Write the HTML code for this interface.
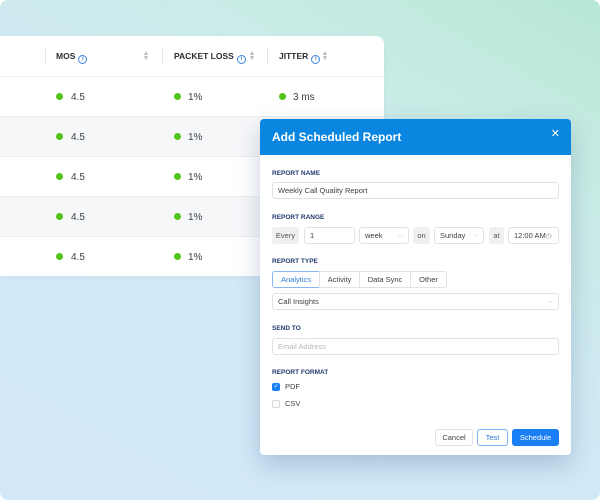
<!DOCTYPE html>
<html><head><style>
*{box-sizing:border-box;margin:0;padding:0}
body{width:600px;height:500px;background:#fff;font-family:"Liberation Sans",sans-serif;overflow:hidden}
#bg{position:absolute;left:0;top:0;width:600px;height:500px;border-radius:8px;overflow:hidden;background:linear-gradient(30deg,#d3e9fa 0%,#d2e9f7 45%,#c9ebe6 75%,#b8e8d6 100%)}
.abs{position:absolute}
#card{left:0;top:36px;width:384px;height:240px;background:#fff;border-radius:0 8px 0 0;overflow:hidden;box-shadow:0 2px 6px rgba(0,0,0,.04)}
.row{position:absolute;left:0;width:384px;height:40px;border-top:1px solid #eceef0}
.hd{font-size:8.5px;font-weight:bold;color:#2a2f36;line-height:10px;white-space:nowrap}
.sep{width:1px;height:18px;background:#e6e8eb;top:11px}
.info{display:inline-block;width:9px;height:9px;border:1px solid #3a86e0;border-radius:50%;font-size:6px;color:#3a86e0;text-align:center;line-height:7px;vertical-align:-1px;margin-left:3px;font-weight:bold}
.sort{color:#b9bec5;font-size:7px;line-height:5px;width:8px;text-align:center}
.v{font-size:10px;color:#3c4148;line-height:12px}
.dot{width:7px;height:7px;border-radius:50%;background:#52c41a}
#modal{left:260px;top:119px;width:311px;height:336px;background:#fff;border-radius:4px;overflow:hidden;box-shadow:0 10px 24px rgba(60,90,130,.28)}
#mh{height:36px;background:#0a86e0;color:#fff;font-weight:bold;font-size:12px;padding:11px 0 0 12px}
.lbl{font-size:6.5px;font-weight:bold;color:#223a6e;left:12px}
.inp{border:1px solid #dfe2e6;border-radius:3px;background:#fff;font-size:7.5px;color:#3c4148;padding-left:5px;line-height:15px;height:17px}
.gb{background:#eff0f2;border-radius:3px;font-size:7.5px;color:#555;text-align:center;line-height:17px;height:17px}
.chev{position:absolute;right:5px;top:0;color:#b8bcc2;font-size:7px;line-height:15px}
.tab{top:152px;height:17px;border:1px solid #dfe2e6;font-size:7.5px;color:#3c4148;text-align:center;line-height:15px;background:#fff}
.btn{top:310px;height:17px;border-radius:3px;font-size:7.5px;text-align:center;line-height:15px}
</style></head><body>
<div id="bg">
<div id="card" class="abs">
 <div class="abs sep" style="left:45px"></div>
 <div class="abs sep" style="left:162px"></div>
 <div class="abs sep" style="left:267px"></div>
 <div class="abs hd" style="left:56px;top:15px">MOS<span class="info">i</span></div>
 <div class="abs sort" style="left:142px;top:15px">▲<br>▼</div>
 <div class="abs hd" style="left:174px;top:15px">PACKET LOSS<span class="info">i</span></div>
 <div class="abs sort" style="left:248px;top:15px">▲<br>▼</div>
 <div class="abs hd" style="left:279px;top:15px">JITTER<span class="info">i</span></div>
 <div class="abs sort" style="left:321px;top:15px">▲<br>▼</div>
 <div class="row" style="top:40px;background:#fff"></div>
 <div class="row" style="top:80px;background:#f6f7f9"></div>
 <div class="row" style="top:120px;background:#fff"></div>
 <div class="row" style="top:160px;background:#f6f7f9"></div>
 <div class="row" style="top:200px;background:#fff"></div>
</div>
<div class="abs" style="left:0;top:38px;width:384px;height:240px">
 <div class="abs dot" style="left:56px;top:55px"></div><div class="abs v" style="left:71px;top:54px">4.5</div>
 <div class="abs dot" style="left:174px;top:55px"></div><div class="abs v" style="left:188px;top:54px">1%</div>
 <div class="abs dot" style="left:279px;top:55px"></div><div class="abs v" style="left:293px;top:54px">3 ms</div>
 <div class="abs dot" style="left:56px;top:95px"></div><div class="abs v" style="left:71px;top:94px">4.5</div>
 <div class="abs dot" style="left:174px;top:95px"></div><div class="abs v" style="left:188px;top:94px">1%</div>
 <div class="abs dot" style="left:56px;top:135px"></div><div class="abs v" style="left:71px;top:134px">4.5</div>
 <div class="abs dot" style="left:174px;top:135px"></div><div class="abs v" style="left:188px;top:134px">1%</div>
 <div class="abs dot" style="left:56px;top:175px"></div><div class="abs v" style="left:71px;top:174px">4.5</div>
 <div class="abs dot" style="left:174px;top:175px"></div><div class="abs v" style="left:188px;top:174px">1%</div>
 <div class="abs dot" style="left:56px;top:215px"></div><div class="abs v" style="left:71px;top:214px">4.5</div>
 <div class="abs dot" style="left:174px;top:215px"></div><div class="abs v" style="left:188px;top:214px">1%</div>
</div>
<div id="modal" class="abs">
 <div id="mh">Add Scheduled Report</div>
 <div class="abs" style="right:11px;top:8px;color:#fff;font-size:11px">✕</div>
 <div class="abs lbl" style="top:51px">REPORT NAME</div>
 <div class="abs inp" style="left:12px;top:63px;width:287px">Weekly Call Quality Report</div>
 <div class="abs lbl" style="top:95px">REPORT RANGE</div>
 <div class="abs gb" style="left:12px;top:108px;width:27px">Every</div>
 <div class="abs inp" style="left:44px;top:108px;width:51px">1</div>
 <div class="abs inp" style="left:99px;top:108px;width:50px">week<span class="chev">⌵</span></div>
 <div class="abs gb" style="left:153px;top:108px;width:17px">on</div>
 <div class="abs inp" style="left:174px;top:108px;width:50px">Sunday<span class="chev">⌵</span></div>
 <div class="abs gb" style="left:229px;top:108px;width:15px">at</div>
 <div class="abs inp" style="left:248px;top:108px;width:51px;padding-left:5px">12:00 AM<span style="color:#999;font-size:7px">◷</span></div>
 <div class="abs lbl" style="top:139px">REPORT TYPE</div>
 <div class="abs tab" style="left:12px;width:48px;border-color:#8ab8ee;color:#2f7fdc;border-radius:3px 0 0 3px">Analytics</div>
 <div class="abs tab" style="left:59px;width:41px">Activity</div>
 <div class="abs tab" style="left:99px;width:52px">Data Sync</div>
 <div class="abs tab" style="left:150px;width:37px;border-radius:0 3px 3px 0">Other</div>
 <div class="abs inp" style="left:12px;top:174px;width:287px">Call Insights<span class="chev">⌵</span></div>
 <div class="abs lbl" style="top:206px">SEND TO</div>
 <div class="abs inp" style="left:12px;top:219px;width:287px;color:#b5b9bf">Email Address</div>
 <div class="abs lbl" style="top:250px">REPORT FORMAT</div>
 <div class="abs" style="left:12px;top:264px;width:8px;height:8px;background:#1a7ef5;border-radius:2px;color:#fff;font-size:6px;line-height:8px;text-align:center">✓</div>
 <div class="abs v" style="left:25px;top:262px;font-size:7.5px">PDF</div>
 <div class="abs" style="left:12px;top:281px;width:8px;height:8px;border:1px solid #d5d8dc;border-radius:2px"></div>
 <div class="abs v" style="left:25px;top:279px;font-size:7.5px">CSV</div>
 <div class="abs btn" style="left:175px;width:38px;border:1px solid #dfe2e6;color:#3c4148">Cancel</div>
 <div class="abs btn" style="left:217px;width:31px;border:1px solid #7fb0ee;color:#2f7fdc">Test</div>
 <div class="abs btn" style="left:252px;width:47px;background:#1a7ef5;color:#fff;line-height:17px">Schedule</div>
</div>
</div>
</body></html>
